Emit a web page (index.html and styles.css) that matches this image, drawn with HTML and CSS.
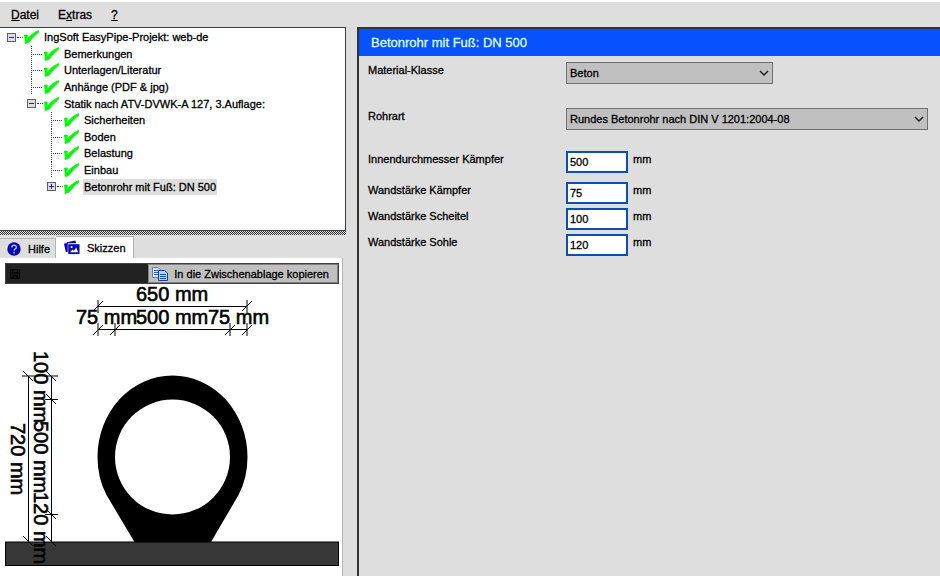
FILE: index.html
```html
<!DOCTYPE html>
<html lang="de">
<head>
  <meta charset="UTF-8">
  <meta name="viewport" content="width=device-width, initial-scale=1.0">
  <title>IngSoft EasyPipe</title>
  <link rel="stylesheet" href="styles.css">
</head>
<body>
  <svg class="defs" aria-hidden="true">
    <symbol id="check" viewBox="0 0 15 14">
      <path d="M0.5 5H3.2V9.4C6 5.5 10 2.5 14.5 0.5V2.5C10.5 5 8 9 4.5 12.5L1.2 13.6C1.2 11 1 8 0.5 5Z" fill="#00f808" stroke="#00f808" stroke-width="0.8"/>
    </symbol>
    <symbol id="arrow" viewBox="0 0 10 6">
      <path d="M1 1L5 5L9 1" fill="none" stroke="#222" stroke-width="1.5"/>
    </symbol>
  </svg>

  <nav class="menu">
    <a href="#"><u>D</u>atei</a>
    <a href="#">E<u>x</u>tras</a>
    <a href="#"><u>?</u></a>
  </nav>

  <div class="main">
    <div class="side">
      <div class="tree-box">
        <ul class="tree">
          <li><button class="node" aria-label="Zuklappen"></button><svg class="check"><use href="#check"/></svg><span>IngSoft EasyPipe-Projekt: web-de</span></li>
          <li class="l2"><i class="twig"></i><svg class="check"><use href="#check"/></svg><span>Bemerkungen</span></li>
          <li class="l2"><i class="twig"></i><svg class="check"><use href="#check"/></svg><span>Unterlagen/Literatur</span></li>
          <li class="l2"><i class="twig"></i><svg class="check"><use href="#check"/></svg><span>Anhänge (PDF &amp; jpg)</span></li>
          <li class="l2"><button class="node" aria-label="Zuklappen"></button><svg class="check"><use href="#check"/></svg><span>Statik nach ATV-DVWK-A 127, 3.Auflage:</span></li>
          <li class="l3"><i class="twig"></i><svg class="check"><use href="#check"/></svg><span>Sicherheiten</span></li>
          <li class="l3"><i class="twig"></i><svg class="check"><use href="#check"/></svg><span>Boden</span></li>
          <li class="l3"><i class="twig"></i><svg class="check"><use href="#check"/></svg><span>Belastung</span></li>
          <li class="l3"><i class="twig"></i><svg class="check"><use href="#check"/></svg><span>Einbau</span></li>
          <li class="l3"><button class="node plus" aria-label="Aufklappen"></button><svg class="check"><use href="#check"/></svg><span class="selected">Betonrohr mit Fuß: DN 500</span></li>
        </ul>
      </div>
      <div class="splitter"></div>

      <div class="tabs">
        <button class="tab">
          <svg width="14" height="14" viewBox="0 0 14 14"><circle cx="7" cy="7" r="6.7" fill="#0808b0"/><path d="M4.8 5.4C4.8 2.6 9.4 2.6 9.4 5.3C9.4 7 7.1 6.8 7.1 8.6M7.1 9.8V11.4" fill="none" stroke="#b8c0ff" stroke-width="1.4"/></svg>
          Hilfe
        </button>
        <button class="tab active">
          <svg width="16" height="15" viewBox="0 0 17 15"><path d="M0 3.5L4 2.5V12L2 12.5Z" fill="#0808b0"/><path d="M3 2L12 0L13 3H3Z" fill="#0808b0"/><path d="M4.5 4H16.5V14.5H4.5Z" fill="#0808b0"/><path d="M6.5 12.5L9 9.5L10.5 11L13 7.5L15 12.5Z" fill="#fff"/><circle cx="8" cy="6.9" r="1.1" fill="#fff"/></svg>
          Skizzen
        </button>
      </div>

      <div class="sketch">
        <div class="toolbar">
          <svg class="save" width="10" height="10" viewBox="0 0 10 10"><path d="M0.5 0.5H9.5V9.5H0.5ZM2.5 0.5V4H7.5V0.5M3 9.5V6.5H7V9.5" fill="none" stroke="#000" stroke-width="1.4"/></svg>
          <button class="copy">
            <svg width="16" height="14" viewBox="0 0 16 14"><path d="M0.5 0.5H6L8.5 3V10.5H0.5Z" fill="#d4e4ff" stroke="#5a80c8"/><path d="M2 3.5H6M2 5.5H6M2 7.5H6" stroke="#2a62c8"/><path d="M6.5 3.5H12.5L15.500 6V13.500H6.500Z" fill="#b8d0ff" stroke="#1a3c9c"/><path d="M8 7.5H14M8 9.5H14M8 11.5H14" stroke="#1c50c4"/></svg>
            In die Zwischenablage kopieren
          </button>
        </div>
        <svg class="drawing" viewBox="5 284 334 292">
          <!-- Boden -->
          <rect x="5.5" y="542" width="333" height="23.5" fill="#373737" stroke="#000"/>
          <!-- Rohr -->
          <path d="M97.5 457A75 81.5 0 0 1 247.5 457Q247.5 478 238.5 495L211 542H134.5L106.5 495Q97.5 478 97.5 457Z"/>
          <circle cx="172.5" cy="457" r="57.5" fill="#fff"/>
          <!-- Masse oben -->
          <g class="dim">
            <path d="M98 306.5H247M98 300V313M247 300V313M93 311L103 301M242 311L252 301"/>
            <path d="M98 329.5H247M98 323V336M115 323V336M230 323V336M247 323V336M93 335L103 325M110 335L120 325M225 335L235 325M242 335L252 325"/>
          </g>
          <text x="136" y="301">650 mm</text>
          <text x="76" y="324">75 mm</text>
          <text x="136" y="324">500 mm</text>
          <text x="208" y="324">75 mm</text>
          <!-- Masse links -->
          <g class="dim">
            <path d="M28.5 376V541M51.5 376V541M22 376H58M45 399.5H58M45 514.5H58"/>
            <path d="M23 371L33 381M46 371L56 381M46 394L56 404M46 509L56 519M23 536L33 546M46 536L56 546"/>
          </g>
          <text transform="translate(11 423) rotate(90)">720 mm</text>
          <text transform="translate(34 351) rotate(90)">100 mm</text>
          <text transform="translate(34 421) rotate(90)">500 mm</text>
          <text transform="translate(34 492) rotate(90)">120 mm</text>
        </svg>
      </div>
    </div>

    <form class="panel">
      <h1>Betonrohr mit Fuß: DN 500</h1>
      <div class="row wide">
        <label for="material">Material-Klasse</label>
        <div class="combo short">
          <select id="material"><option>Beton</option></select>
          <svg><use href="#arrow"/></svg>
        </div>
      </div>
      <div class="row wide">
        <label for="rohrart">Rohrart</label>
        <div class="combo">
          <select id="rohrart"><option>Rundes Betonrohr nach DIN V 1201:2004-08</option></select>
          <svg><use href="#arrow"/></svg>
        </div>
      </div>
      <div class="row first">
        <label for="innen">Innendurchmesser Kämpfer</label>
        <input id="innen" type="text" value="500"><span>mm</span>
      </div>
      <div class="row">
        <label for="kaempfer">Wandstärke Kämpfer</label>
        <input id="kaempfer" type="text" value="75"><span>mm</span>
      </div>
      <div class="row">
        <label for="scheitel">Wandstärke Scheitel</label>
        <input id="scheitel" type="text" value="100"><span>mm</span>
      </div>
      <div class="row">
        <label for="sohle">Wandstärke Sohle</label>
        <input id="sohle" type="text" value="120"><span>mm</span>
      </div>
    </form>
  </div>
</body>
</html>
```
FILE: styles.css
```css
*{
  margin: 0;
  padding: 0;
  box-sizing: border-box;
}
body{
  min-height: 100vh;
  display: flex;
  flex-direction: column;
  background: #dedede;
  border-top: 2px solid #ffffff;
  color: #000000;
  font: 11px/16px "Liberation Sans", sans-serif;
  -webkit-text-stroke: 0.3px;
}
button, input, select{
  font: inherit;
  color: inherit;
  border-radius: 0;
}
.defs{
  display: none;
}
.menu{
  display: flex;
  gap: 19px;
  height: 25px;
  padding: 5px 11px;
  font-size: 12px;
}
.menu a{
  color: #000000;
  text-decoration: none;
}
.main{
  flex: 1;
  display: grid;
  grid-template-columns: 346fr 583fr;
  gap: 11px;
}
.side{
  display: flex;
  flex-direction: column;
  min-width: 0;
}

/* Baum */
.tree-box{
  height: 204px;
  background: #ffffff;
  border: 1px solid #3c4148;
  border-left: 0;
  padding-top: 1px;
}
.tree{
  height: 166px;
  display: grid;
  grid-auto-rows: 1fr;
  list-style: none;
}
.tree li{
  display: flex;
  align-items: center;
  padding-left: 7px;
  white-space: nowrap;
}
.tree .l2{
  padding-left: 27px;
}
.tree .l3{
  padding-left: 47px;
}
.node{
  width: 9px;
  height: 9px;
  margin-right: 8px;
  border: 1px solid #606060;
  background: linear-gradient(#1c2f80, #1c2f80) center / 5px 1px no-repeat #dddddd;
  position: relative;
}
.node.plus{
  background: linear-gradient(#1c2f80, #1c2f80) center / 5px 1px no-repeat, linear-gradient(#1c2f80, #1c2f80) center / 1px 5px no-repeat, #dddddd;
}
.node::after{
  content: "";
  position: absolute;
  left: 9px;
  top: 3px;
  width: 6px;
  border-top: 1px dotted #404040;
}
.twig{
  align-self: stretch;
  width: 17px;
  background:
    repeating-linear-gradient(#404040 0 1px, transparent 1px 2px) 4px 0 / 1px 100% no-repeat,
    repeating-linear-gradient(90deg, #404040 0 1px, transparent 1px 2px) 4px 8px / 12px 1px no-repeat;
}
.check{
  width: 15px;
  height: 14px;
  margin-right: 4px;
}
.tree span{
  padding: 0 1px;
}
.tree .selected{
  background: #dedede;
}
.splitter{
  height: 4px;
  background: repeating-conic-gradient(#333333 0 25%, #dedede 0 50%) 0 0 / 2px 2px;
}

/* Reiter */
.tabs{
  display: flex;
  align-items: flex-end;
  height: 23px;
  padding-top: 1px;
}
.tab{
  display: flex;
  align-items: center;
  gap: 7px;
  height: 20px;
  padding: 0 5px 0 7px;
  background: #dedede;
  border: 1px solid #b4b4b4;
  border-width: 1px 1px 0 0;
}
.tab.active{
  height: 22px;
  padding: 0 7px 0 8px;
  background: #ffffff;
}
.sketch{
  flex: 1;
  margin-right: 3px;
  padding: 5px 3px 0 5px;
  background: #ffffff;
  border: 1px solid #b4b4b4;
  border-width: 0 1px 0 0;
}
.toolbar{
  display: flex;
  justify-content: space-between;
  align-items: center;
  height: 21px;
  border: 1px solid #404040;
  background: #222222;
}
.save{
  margin-left: 4px;
}
.copy{
  display: flex;
  align-items: center;
  gap: 6px;
  height: 19px;
  padding: 0 8px 0 3px;
  border: 1px solid #808080;
  background: #c0c0c0;
}
.drawing{
  display: block;
  width: 100%;
}
.drawing text{
  font-size: 20px;
  -webkit-text-stroke: 0;
  stroke: #000000;
  stroke-width: 0.6px;
}
.dim{
  fill: none;
  stroke: #000000;
}

/* Eingabe */
.panel{
  min-width: 0;
  border: 2px solid #333333;
  border-width: 2px 0 0 2px;
}
.panel h1{
  height: 27px;
  margin-bottom: 6px;
  padding: 0 12px;
  background: #0751ff;
  color: #dcfff0;
  font: 13px/28px "Liberation Sans", sans-serif;
}
.row{
  display: grid;
  grid-template-columns: 198px 62px 1fr;
  padding: 0 12px 4px 9px;
}
.row.wide{
  grid-template-columns: 198px 1fr;
  padding-bottom: 24px;
}
.row.wide + .row.wide{
  padding-bottom: 21px;
}
.row.first{
  padding-bottom: 9px;
}
.row span{
  padding-left: 5px;
}
.row input{
  height: 22px;
  padding: 0 2px;
  border: 2px solid #0a50b4;
  background: #ffffff;
}
.combo{
  display: grid;
  align-items: center;
}
.combo.short{
  max-width: 207px;
}
.combo select, .combo svg{
  grid-area: 1 / 1;
}
.combo select{
  width: 100%;
  height: 22px;
  padding: 0 3px;
  border: 1px solid #707070;
  background: #c0c0c0;
  appearance: none;
}
.combo svg{
  justify-self: end;
  width: 10px;
  height: 6px;
  margin-right: 4px;
  pointer-events: none;
}
```
